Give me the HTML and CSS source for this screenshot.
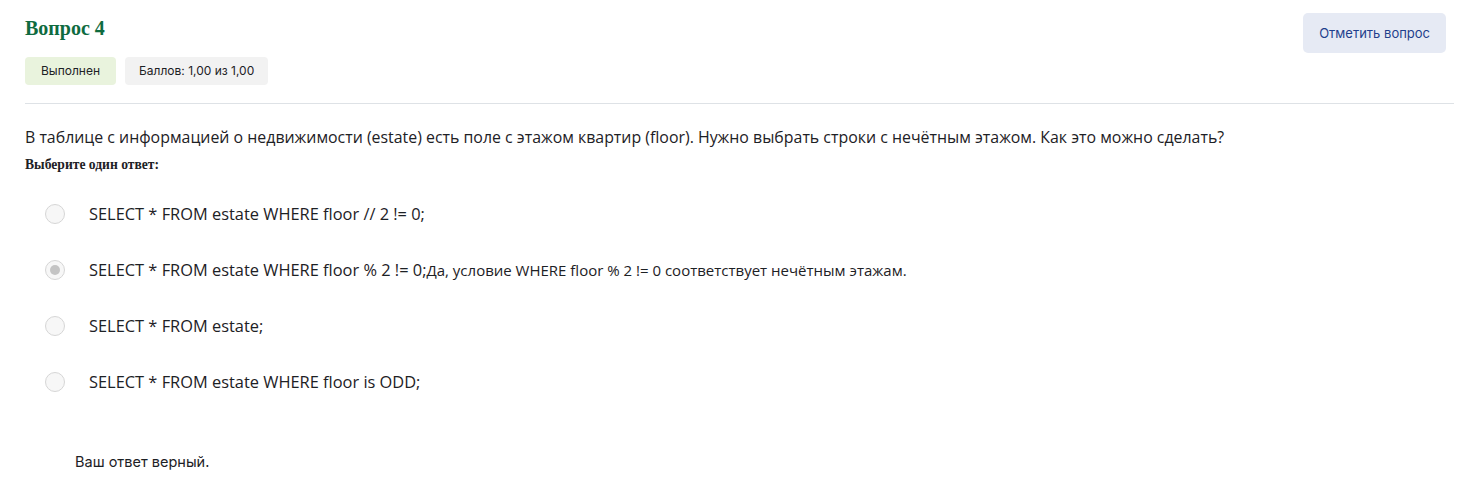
FILE: index.html
```html
<!DOCTYPE html>
<html lang="ru">
<head>
<meta charset="utf-8">
<link rel="stylesheet" href="styles.css">
</head>
<body>
<div class="que">
  <div class="info">
    <div class="info-left">
      <h3 class="qno">Вопрос 4</h3>
      <div class="badges">
        <span class="badge done">Выполнен</span>
        <span class="badge grade">Баллов: 1,00 из 1,00</span>
      </div>
    </div>
    <button class="flag">Отметить вопрос</button>
  </div>
  <div class="content">
    <p class="qtext">В таблице с информацией о недвижимости (estate) есть поле с этажом квартир (floor). Нужно выбрать строки с нечётным этажом. Как это можно сделать?</p>
    <div class="prompt">Выберите один ответ:</div>
    <div class="answers">
      <div class="opt"><span class="radio"></span><span class="lbl">SELECT * FROM estate WHERE floor // 2 != 0;</span></div>
      <div class="opt"><span class="radio checked"></span><span class="lbl">SELECT * FROM estate WHERE floor % 2 != 0;<span class="fb">Да, условие WHERE floor % 2 != 0 соответствует нечётным этажам.</span></span></div>
      <div class="opt"><span class="radio"></span><span class="lbl">SELECT * FROM estate;</span></div>
      <div class="opt"><span class="radio"></span><span class="lbl">SELECT * FROM estate WHERE floor is ODD;</span></div>
    </div>
    <div class="outcome">Ваш ответ верный.</div>
  </div>
</div>
</body>
</html>
```
FILE: styles.css
```css
* { box-sizing: border-box; }
html, body { margin: 0; padding: 0; background: #fff; }
body { font-family: "Open Sans", "Noto Sans", sans-serif; color: #1d2125; }
.que { padding: 13px 13px 0 25px; }
.info { display: flex; justify-content: space-between; align-items: flex-start; padding-bottom: 18px; border-bottom: 1px solid #dee2e6; }
.qno { margin: 3px 0 0; font-family: "Liberation Serif", serif; font-weight: bold; font-size: 20px; line-height: 24px; color: #0f6b3f; }
.badges { display: flex; gap: 9px; margin-top: 17px; }
.badge { font-family: "Inter", "Open Sans", sans-serif; font-size: 12px; line-height: 28px; height: 28px; padding: 0 16px; border-radius: 4px; color: #1d2125; }
.done { background: #e9f3dd; }
.grade { background: #f2f2f2; padding: 0 14px; }
.flag { margin-right: 8px; height: 40px; padding: 0 16px; border: none; border-radius: 5px; background: #e6eaf4; color: #1f3f8c; font-family: "Inter", "Open Sans", sans-serif; font-size: 13px; }
.content { padding-top: 21px; }
.qtext { margin: 0; font-size: 15.9px; line-height: 24px; }
.prompt { margin-top: 7px; font-family: "Liberation Serif", serif; font-weight: bold; font-size: 13.6px; line-height: 18px; }
.answers { margin-top: 28px; padding-left: 20px; display: flex; flex-direction: column; gap: 32px; }
.opt { display: flex; align-items: center; gap: 24px; height: 24px; }
.radio { width: 20px; height: 20px; border-radius: 50%; border: 1px solid #d6d6d6; background: #f7f7f7; display: flex; align-items: center; justify-content: center; flex: none; }
.radio.checked::after { content: ""; width: 10px; height: 10px; border-radius: 50%; background: #c4c4c4; }
.lbl { font-size: 16.4px; line-height: 24px; }
.fb { font-size: 15px; }
.outcome { margin-top: 58px; margin-left: 50px; font-family: "Inter", "Open Sans", sans-serif; font-size: 14.5px; line-height: 20px; }
```
